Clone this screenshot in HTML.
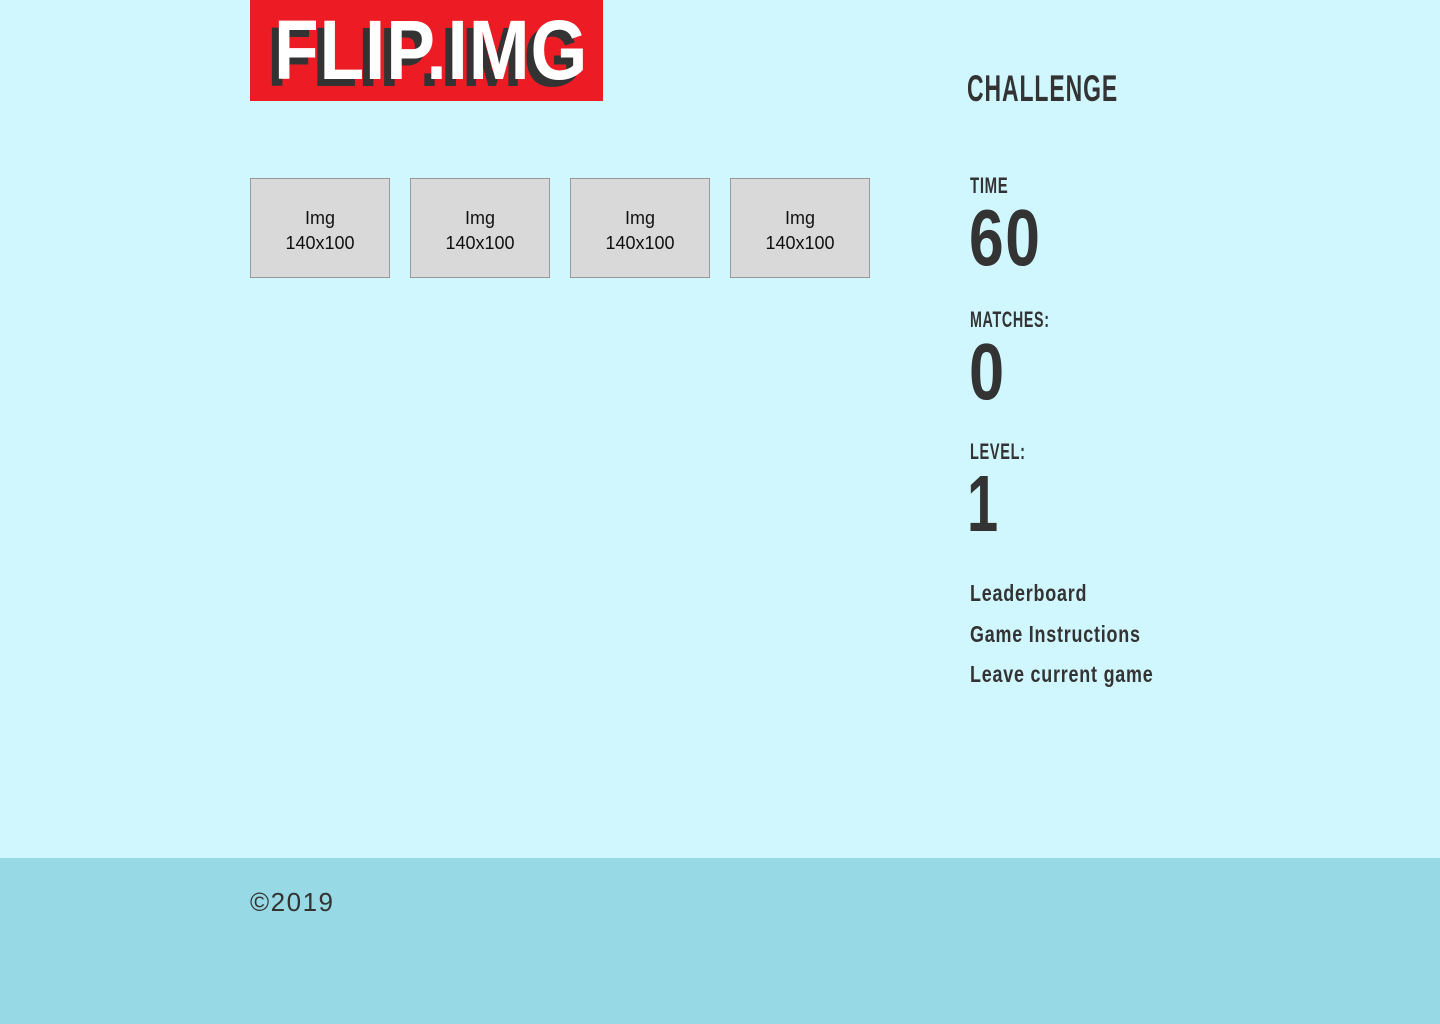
<!DOCTYPE html>
<html><head><meta charset="utf-8"><style>
body{margin:0;width:1440px;height:1024px;background:#d0f7fe;position:relative;overflow:hidden;font-family:"Liberation Sans",sans-serif;color:#333}
.a{position:absolute;line-height:1;white-space:nowrap;transform-origin:0 0;font-weight:bold;color:#333}
.logo{position:absolute;left:250px;top:0;width:353px;height:101px;background:#ed1c24}
.card{position:absolute;top:178px;width:138px;height:98px;background:#d9d9d9;border:1px solid #999;text-align:center;font-size:18px;line-height:25px;color:#111;box-sizing:content-box}
.card div{padding-top:27px}
footer{position:absolute;left:0;top:858px;width:1440px;height:166px;background:#97d9e5}
</style></head><body>
<div class="logo"></div>
<div class="a" style="left:267px;top:15px;font-size:84px;color:#333;letter-spacing:1px;transform:scaleX(.87)">FLIP.IMG</div>
<div class="a" style="left:274px;top:8px;font-size:84px;color:#fff;letter-spacing:1px;transform:scaleX(.87)">FLIP.IMG</div>

<div class="card" style="left:250px"><div>Img<br>140x100</div></div>
<div class="card" style="left:410px"><div>Img<br>140x100</div></div>
<div class="card" style="left:570px"><div>Img<br>140x100</div></div>
<div class="card" style="left:730px"><div>Img<br>140x100</div></div>

<div class="a" style="left:967px;top:70px;font-size:37px;letter-spacing:1.5px;transform:scaleX(.62)">CHALLENGE</div>
<div class="a" style="left:970px;top:175px;font-size:22px;letter-spacing:1px;transform:scaleX(.68)">TIME</div>
<div class="a" style="left:969px;top:198px;font-size:80px;letter-spacing:2px;transform:scaleX(.78)">60</div>
<div class="a" style="left:970px;top:309px;font-size:22px;letter-spacing:1px;transform:scaleX(.65)">MATCHES:</div>
<div class="a" style="left:969px;top:332px;font-size:80px;transform:scaleX(.79)">0</div>
<div class="a" style="left:970px;top:441px;font-size:22px;letter-spacing:1px;transform:scaleX(.66)">LEVEL:</div>
<div class="a" style="left:967px;top:464px;font-size:80px;transform:scaleX(.7)">1</div>
<div class="a" style="left:970px;top:582px;font-size:23px;letter-spacing:1px;transform:scaleX(.78)">Leaderboard</div>
<div class="a" style="left:970px;top:623px;font-size:23px;letter-spacing:1px;transform:scaleX(.78)">Game Instructions</div>
<div class="a" style="left:970px;top:663px;font-size:23px;letter-spacing:1px;transform:scaleX(.78)">Leave current game</div>

<footer></footer>
<div class="a" style="left:250px;top:889px;font-size:26px;font-weight:normal;letter-spacing:1.5px">©2019</div>
</body></html>
